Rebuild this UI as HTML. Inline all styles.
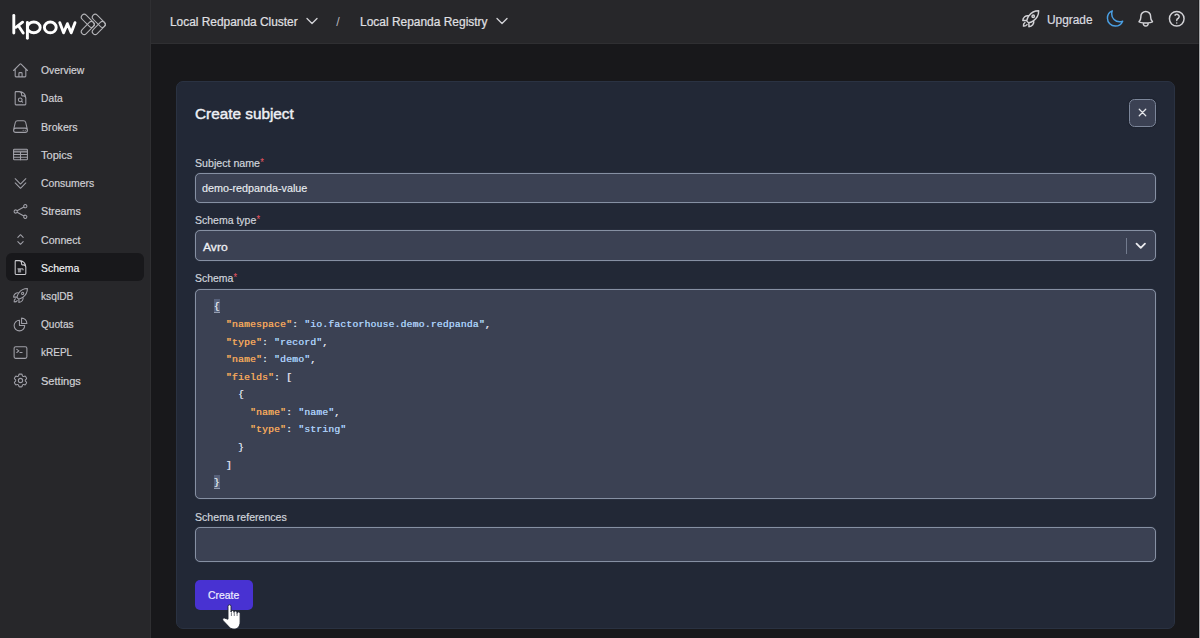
<!DOCTYPE html>
<html lang="en">
<head>
<meta charset="utf-8">
<title>kpow - Create subject</title>
<style>
*{box-sizing:border-box;margin:0;padding:0}
html,body{width:1200px;height:638px;overflow:hidden;background:#18181b;font-family:"Liberation Sans",sans-serif;color:#e5e7eb}
.t{position:absolute;white-space:nowrap;line-height:1;transform-origin:0 50%;display:block}
#sidebar{position:absolute;left:0;top:0;width:151px;height:638px;background:#27272a;border-right:1px solid #2f2f32}
#header{position:absolute;left:151px;top:0;width:1049px;height:44px;background:#27272a;border-bottom:1px solid #2f2f32}
#navactive{position:absolute;left:6px;top:253.3px;width:138px;height:27.6px;border-radius:6px;background:#18181b}
.ni{position:absolute;left:11.85px;width:17px;height:17px;fill:none;stroke:#a0a0a8;color:#a0a0a8;stroke-width:1.5;stroke-linecap:round;stroke-linejoin:round}
.ni.on{stroke:#c9c9ce;color:#c9c9ce}
.nt{color:#d0d0d5;-webkit-text-stroke:0.2px #d0d0d5}
.hicon{position:absolute;fill:none;stroke:#d2d2d6;stroke-width:1.8;stroke-linecap:round;stroke-linejoin:round}
#panel{position:absolute;left:176px;top:81px;width:999px;height:548px;background:#222836;border:1px solid #2a3242;border-radius:7px}
.lab{color:#d0d4dc;-webkit-text-stroke:0.2px #d0d4dc}
.lab i{font-style:normal;color:#ee5661;font-size:10px;position:relative;top:-0.9px;left:0.4px;-webkit-text-stroke:0}
.field{position:absolute;left:195px;width:961px;background:#3b4153;border:1px solid #8690a3;border-radius:5px;box-shadow:0 0 1px rgba(134,144,163,.55)}
#code{position:absolute;left:195px;top:288.6px;width:961px;height:210.4px;background:#3b4153;border:1px solid #8690a3;border-radius:5px;box-shadow:0 0 1px rgba(134,144,163,.55)}
#code pre{position:absolute;left:17.8px;top:8.8px;font-family:"Liberation Mono",monospace;font-size:9.7px;letter-spacing:0.21px;line-height:17.58px;color:#d7dce6;text-shadow:0.3px 0 0 currentColor}
#code .k{color:#efa65c}
#code .s{color:#a8ccf3}
#code .m{background:#57617b;padding:2px 0 0;border-bottom:1px solid #949db0;color:#dde1e9}
#close{position:absolute;left:1129px;top:99.3px;width:27.2px;height:27.3px;background:#3b4153;border:1px solid #7c869a;border-radius:5.5px;box-shadow:0 0 2px rgba(0,0,0,.35)}
#close svg{position:absolute;left:6.1px;top:6.1px;width:13px;height:13px;fill:none;stroke:#e4e6ea;stroke-width:2.3;stroke-linecap:round}
#create{position:absolute;left:195px;top:580px;width:58px;height:30px;background:#4832d2;border-radius:5px}
#edge{position:absolute;left:1199px;top:0;width:1px;height:638px;background:#ababad}
#edge2{position:absolute;left:1198px;top:0;width:1px;height:638px;background:rgba(0,0,0,.22)}
</style>
</head>
<body>
<div id="sidebar">
<svg style="position:absolute;left:0;top:0" width="150" height="50" viewBox="0 0 150 50" fill="none">
<g stroke="#ffffff" stroke-width="2.9" stroke-linecap="round" stroke-linejoin="round">
<path d="M13.8 15.4V33"/><path d="M22.6 22.2 15.8 27.3"/><path d="M18.6 26 23.2 33"/>
<ellipse cx="33.8" cy="27.4" rx="6.4" ry="5.4"/><path d="M27.4 22.5V38.2"/>
<ellipse cx="50.3" cy="27.4" rx="5.9" ry="5.4"/>
<path d="M59.8 22.7 63.6 32.8 67.4 23.7 71.2 32.8 75 22.7"/>
</g>
<g stroke="#b4b4b8" stroke-width="1.05">
<rect x="-2.9" y="-2.9" width="15.95" height="5.8" rx="2.9" transform="translate(84.2 17.2) rotate(45)"/><rect x="-2.9" y="-2.9" width="15.95" height="5.8" rx="2.9" transform="translate(84.2 31.6) rotate(-45)"/><rect x="-2.9" y="-2.9" width="15.95" height="5.8" rx="2.9" transform="translate(95.2 17.2) rotate(45)"/><rect x="-2.9" y="-2.9" width="15.95" height="5.8" rx="2.9" transform="translate(95.2 31.6) rotate(-45)"/>
</g>
</svg>
<div id="navactive"></div>
<svg class="ni" style="top:61.70px" viewBox="0 0 24 24"><path d="m2.25 12 8.954-8.955c.44-.439 1.152-.439 1.591 0L21.75 12M4.5 9.75v10.125c0 .621.504 1.125 1.125 1.125H9.75v-4.875c0-.621.504-1.125 1.125-1.125h2.25c.621 0 1.125.504 1.125 1.125V21h4.125c.621 0 1.125-.504 1.125-1.125V9.75M8.25 21h8.25"/></svg><span class="t nt" style="left:41.00px;top:65.27px;font-size:11.5px;transform:scaleX(0.9030);">Overview</span>
<svg class="ni" style="top:89.92px" viewBox="0 0 24 24"><path d="M19.5 14.25v-2.625a3.375 3.375 0 0 0-3.375-3.375h-1.5A1.125 1.125 0 0 1 13.5 7.125v-1.5a3.375 3.375 0 0 0-3.375-3.375H8.25m5.231 13.481L15 17.25m-4.5-15H5.625c-.621 0-1.125.504-1.125 1.125v16.5c0 .621.504 1.125 1.125 1.125h12.75c.621 0 1.125-.504 1.125-1.125V11.25a9 9 0 0 0-9-9Zm3.75 11.625a2.625 2.625 0 1 1-5.25 0 2.625 2.625 0 0 1 5.25 0Z"/></svg><span class="t nt" style="left:41.00px;top:93.49px;font-size:11.5px;transform:scaleX(0.8930);">Data</span>
<svg class="ni" style="top:118.14px" viewBox="0 0 24 24"><path d="M21.75 17.25v-.228a4.5 4.5 0 0 0-.12-1.03l-2.268-9.64a3.375 3.375 0 0 0-3.285-2.602H7.923a3.375 3.375 0 0 0-3.285 2.602l-2.268 9.64a4.5 4.5 0 0 0-.12 1.03v.228m19.5 0a3 3 0 0 1-3 3H5.25a3 3 0 0 1-3-3m19.5 0a3 3 0 0 0-3-3H5.25a3 3 0 0 0-3 3m16.5 0h.008v.008h-.008v-.008Zm-3 0h.008v.008h-.008v-.008Z"/></svg><span class="t nt" style="left:41.00px;top:121.71px;font-size:11.5px;transform:scaleX(0.9260);">Brokers</span>
<svg class="ni" style="top:146.36px" viewBox="0 0 24 24"><rect x="2.25" y="4.5" width="19.5" height="3.75" fill="currentColor" stroke="none" opacity=".3"/><rect x="2.25" y="4.5" width="19.5" height="15" rx="1.2"/><path d="M2.25 8.25h19.5M2.25 12h19.5M2.25 15.75h19.5M12 8.25V19.5"/></svg><span class="t nt" style="left:41.00px;top:149.93px;font-size:11.5px;transform:scaleX(0.9630);">Topics</span>
<svg class="ni" style="top:174.58px" viewBox="0 0 24 24"><path d="m4.5 5.25 7.5 7.5 7.5-7.5m-15 6 7.5 7.5 7.5-7.5"/></svg><span class="t nt" style="left:41.00px;top:178.15px;font-size:11.5px;transform:scaleX(0.9060);">Consumers</span>
<svg class="ni" style="top:202.80px" viewBox="0 0 24 24"><path d="M7.217 10.907a2.25 2.25 0 1 0 0 2.186m0-2.186c.18.324.283.696.283 1.093s-.103.77-.283 1.093m0-2.186 9.566-5.314m-9.566 7.5 9.566 5.314m0 0a2.25 2.25 0 1 0 3.935 2.186 2.25 2.25 0 0 0-3.935-2.186Zm0-12.814a2.25 2.25 0 1 0 3.933-2.185 2.25 2.25 0 0 0-3.933 2.185Z"/></svg><span class="t nt" style="left:41.00px;top:206.37px;font-size:11.5px;transform:scaleX(0.9300);">Streams</span>
<svg class="ni" style="top:231.02px" viewBox="0 0 24 24"><path d="M8.25 15 12 18.75 15.75 15m-7.5-6L12 5.25 15.75 9"/></svg><span class="t nt" style="left:41.00px;top:234.59px;font-size:11.5px;transform:scaleX(0.9220);">Connect</span>
<svg class="ni on" style="top:259.24px" viewBox="0 0 24 24"><path d="M19.5 14.25v-2.625a3.375 3.375 0 0 0-3.375-3.375h-1.5A1.125 1.125 0 0 1 13.5 7.125v-1.5a3.375 3.375 0 0 0-3.375-3.375H8.25m2.250 0H5.625c-.621 0-1.125.504-1.125 1.125v17.25c0 .621.504 1.125 1.125 1.125h12.75c.621 0 1.125-.504 1.125-1.125V11.25a9 9 0 0 0-9-9Z"/><rect x="8.3" y="14" width="4.6" height="5" fill="#8d8d93" stroke="none"/><path d="M8.3 13.9h7.300v1.600" stroke-width="1.300"/></svg><span class="t nt" style="left:41.00px;top:262.81px;font-size:11.5px;transform:scaleX(0.9080);color:#ffffff;">Schema</span>
<svg class="ni" style="top:287.46px" viewBox="0 0 24 24"><path d="M15.59 14.37a6 6 0 0 1-5.84 7.38v-4.8m5.84-2.58a14.98 14.98 0 0 0 6.16-12.12A14.98 14.98 0 0 0 9.631 8.41m5.96 5.96a14.926 14.926 0 0 1-5.841 2.58m-.119-8.54a6 6 0 0 0-7.381 5.84h4.8m2.581-5.84a14.927 14.927 0 0 0-2.58 5.84m2.699 2.7c-.103.021-.207.041-.311.06a15.09 15.09 0 0 1-2.448-2.448 14.9 14.9 0 0 1 .06-.312m-2.24 2.39a4.493 4.493 0 0 0-1.757 4.306 4.493 4.493 0 0 0 4.306-1.758M16.5 9a1.5 1.5 0 1 1-3 0 1.5 1.5 0 0 1 3 0Z"/></svg><span class="t nt" style="left:41.00px;top:291.03px;font-size:11.5px;transform:scaleX(0.8890);">ksqlDB</span>
<svg class="ni" style="top:315.68px" viewBox="0 0 24 24"><path d="M10.5 6a7.5 7.5 0 1 0 7.5 7.5h-7.5V6Z"/><path d="M13.5 10.5H21A7.5 7.5 0 0 0 13.5 3v7.5Z"/></svg><span class="t nt" style="left:41.00px;top:319.25px;font-size:11.5px;transform:scaleX(0.8790);">Quotas</span>
<svg class="ni" style="top:343.90px" viewBox="0 0 24 24"><path d="m6.75 7.5 3 2.25-3 2.25m4.5 0h3m-9 8.25h13.5A2.25 2.25 0 0 0 21 18V6a2.25 2.25 0 0 0-2.25-2.25H5.25A2.25 2.25 0 0 0 3 6v12a2.25 2.25 0 0 0 2.25 2.25Z"/></svg><span class="t nt" style="left:41.00px;top:347.47px;font-size:11.5px;transform:scaleX(0.8690);">kREPL</span>
<svg class="ni" style="top:372.12px" viewBox="0 0 24 24"><path d="M9.594 3.94c.09-.542.56-.94 1.11-.94h2.593c.55 0 1.02.398 1.11.94l.213 1.281c.063.374.313.686.645.87.074.04.147.083.22.127.325.196.72.257 1.075.124l1.217-.456a1.125 1.125 0 0 1 1.37.49l1.296 2.247a1.125 1.125 0 0 1-.26 1.431l-1.003.827c-.293.241-.438.613-.43.992a7.723 7.723 0 0 1 0 .255c-.008.378.137.75.43.991l1.004.827c.424.35.534.955.26 1.43l-1.298 2.247a1.125 1.125 0 0 1-1.369.491l-1.217-.456c-.355-.133-.75-.072-1.076.124a6.47 6.47 0 0 1-.22.128c-.331.183-.581.495-.644.869l-.213 1.281c-.09.543-.56.94-1.11.94h-2.594c-.55 0-1.019-.398-1.11-.94l-.213-1.281c-.062-.374-.312-.686-.644-.87a6.52 6.52 0 0 1-.22-.127c-.325-.196-.72-.257-1.076-.124l-1.217.456a1.125 1.125 0 0 1-1.369-.49l-1.297-2.247a1.125 1.125 0 0 1 .26-1.431l1.004-.827c.292-.24.437-.613.43-.991a6.932 6.932 0 0 1 0-.255c.007-.38-.138-.751-.43-.992l-1.004-.827a1.125 1.125 0 0 1-.26-1.43l1.297-2.247a1.125 1.125 0 0 1 1.37-.491l1.216.456c.356.133.751.072 1.076-.124.072-.044.146-.086.22-.128.332-.183.582-.495.644-.869l.214-1.28Z"/><path d="M15 12a3 3 0 1 1-6 0 3 3 0 0 1 6 0Z"/></svg><span class="t nt" style="left:41.00px;top:375.69px;font-size:11.5px;transform:scaleX(0.9600);">Settings</span>
</div>
<div id="header"><span class="t" style="left:19.00px;top:15.92px;font-size:12.5px;transform:scaleX(0.9520);color:#e0e0e4;-webkit-text-stroke:0.2px #e0e0e4;">Local Redpanda Cluster</span><svg class="hicon" style="left:153.15px;top:13.00px;width:16px;height:16px;stroke-width:2" viewBox="0 0 24 24"><path d="m19.5 8.25-7.5 7.5-7.5-7.5"/></svg><span class="t" style="left:185.30px;top:15.92px;font-size:12.5px;color:#b4b4bc;">/</span><span class="t" style="left:209.00px;top:15.92px;font-size:12.5px;transform:scaleX(0.9560);color:#e0e0e4;-webkit-text-stroke:0.2px #e0e0e4;">Local Repanda Registry</span><svg class="hicon" style="left:343.20px;top:13.00px;width:16px;height:16px;stroke-width:2" viewBox="0 0 24 24"><path d="m19.5 8.25-7.5 7.5-7.5-7.5"/></svg><svg class="hicon" style="left:870.45px;top:8.85px;width:19.5px;height:19.5px;" viewBox="0 0 24 24"><path d="M15.59 14.37a6 6 0 0 1-5.84 7.38v-4.8m5.84-2.58a14.98 14.98 0 0 0 6.16-12.12A14.98 14.98 0 0 0 9.631 8.41m5.96 5.96a14.926 14.926 0 0 1-5.841 2.58m-.119-8.54a6 6 0 0 0-7.381 5.84h4.8m2.581-5.84a14.927 14.927 0 0 0-2.58 5.84m2.699 2.7c-.103.021-.207.041-.311.06a15.09 15.09 0 0 1-2.448-2.448 14.9 14.9 0 0 1 .06-.312m-2.24 2.39a4.493 4.493 0 0 0-1.757 4.306 4.493 4.493 0 0 0 4.306-1.758M16.5 9a1.5 1.5 0 1 1-3 0 1.5 1.5 0 0 1 3 0Z"/></svg><span class="t" style="left:895.75px;top:13.72px;font-size:12.5px;transform:scaleX(0.9490);color:#dcdce0;-webkit-text-stroke:0.2px #dcdce0;">Upgrade</span><svg class="hicon" style="left:953.95px;top:8.55px;width:19.5px;height:19.5px;stroke:#4a9fe3" viewBox="0 0 24 24"><path d="M21.752 15.002A9.72 9.72 0 0 1 18 15.75c-5.385 0-9.75-4.365-9.75-9.75 0-1.33.266-2.597.748-3.752A9.753 9.753 0 0 0 3 11.25C3 16.635 7.365 21 12.75 21a9.753 9.753 0 0 0 9.002-5.998Z"/></svg><svg class="hicon" style="left:985.35px;top:8.85px;width:19.5px;height:19.5px;" viewBox="0 0 24 24"><path d="M14.857 17.082a23.848 23.848 0 0 0 5.454-1.31A8.967 8.967 0 0 1 18 9.75V9A6 6 0 0 0 6 9v.75a8.967 8.967 0 0 1-2.312 6.022c1.733.64 3.56 1.085 5.455 1.31m5.714 0a24.255 24.255 0 0 1-5.714 0m5.714 0a3 3 0 1 1-5.714 0"/></svg><svg class="hicon" style="left:1016.15px;top:8.95px;width:19.5px;height:19.5px;" viewBox="0 0 24 24"><path d="M9.879 7.519c1.171-1.025 3.071-1.025 4.242 0 1.172 1.025 1.172 2.687 0 3.712-.203.179-.43.326-.67.442-.745.361-1.45.999-1.45 1.827v.75M21 12a9 9 0 1 1-18 0 9 9 0 0 1 18 0Zm-9 5.25h.008v.008H12v-.008Z"/></svg></div>
<div id="panel"></div>
<span class="t" style="left:195.00px;top:106.55px;font-size:14px;transform:scaleX(1.0940);color:#eef0f5;-webkit-text-stroke:0.4px #eef0f5;">Create subject</span>
<div id="close"><svg viewBox="0 0 24 24"><path d="M6 18 18 6M6 6l12 12"/></svg></div>
<span class="t lab" style="left:195.00px;top:157.57px;font-size:11.5px;transform:scaleX(0.9240);">Subject name<i>*</i></span>
<div class="field" style="top:173px;height:29.5px"></div>
<span class="t" style="left:201.90px;top:183.47px;font-size:11.5px;transform:scaleX(0.9360);color:#e9ecf1;-webkit-text-stroke:0.15px #e9ecf1;">demo-redpanda-value</span>
<span class="t lab" style="left:195.00px;top:215.37px;font-size:11.5px;transform:scaleX(0.9120);">Schema type<i>*</i></span>
<div class="field" style="top:230.2px;height:30.6px"></div>
<span class="t" style="left:203.20px;top:240.68px;font-size:11.6px;transform:scaleX(1.0460);color:#eef0f4;-webkit-text-stroke:0.3px #eef0f4;">Avro</span>
<div style="position:absolute;left:1126px;top:237.5px;width:1px;height:16px;background:#727b8e"></div>
<svg style="position:absolute;left:1134.25px;top:238.95px;width:13.5px;height:13.5px;fill:none;stroke:#ecedf0;stroke-width:3.2;stroke-linecap:round;stroke-linejoin:round" viewBox="0 0 24 24"><path d="m19.5 8.25-7.5 7.5-7.5-7.5"/></svg>
<span class="t lab" style="left:195.00px;top:273.27px;font-size:11.5px;transform:scaleX(0.9050);">Schema<i>*</i></span>
<div id="code"><pre><span class="m">{</span>
  <span class="k">"namespace"</span>: <span class="s">"io.factorhouse.demo.redpanda"</span>,
  <span class="k">"type"</span>: <span class="s">"record"</span>,
  <span class="k">"name"</span>: <span class="s">"demo"</span>,
  <span class="k">"fields"</span>: [
    {
      <span class="k">"name"</span>: <span class="s">"name"</span>,
      <span class="k">"type"</span>: <span class="s">"string"</span>
    }
  ]
<span class="m">}</span></pre></div>
<span class="t lab" style="left:195.00px;top:511.57px;font-size:11.5px;transform:scaleX(0.9206);">Schema references</span>
<div class="field" style="top:527.3px;height:34.8px"></div>
<div id="create"></div>
<span class="t" style="left:208.00px;top:590.33px;font-size:11.3px;transform:scaleX(0.9230);color:#efedff;-webkit-text-stroke:0.2px #efedff;">Create</span>
<svg style="position:absolute;left:220px;top:602px" width="24" height="30" viewBox="0 0 24 30">
<path d="M8 4.300A1.500 1.500 0 0 1 11 4.300L11 10A1.450 1.450 0 0 1 14 10L14 10.500A1.450 1.450 0 0 1 17 10.500L17 11.500A1.550 1.550 0 0 1 20.100 11.500L20.100 20C20.100 24.500 17.500 27.100 14 27.100C11.200 27.100 9.600 25.800 8.500 24.300L3.200 18.700C2.200 17.500 2.800 15.700 4.500 16.100L8 17.200Z" fill="#ffffff" stroke="#1d2230" stroke-width="0.9" stroke-linejoin="round"/>
<path d="M11.400 10.300V14M14.250 10.700V14M17.100 11.600V14" stroke="#3a3f4c" stroke-width="0.7" fill="none"/>
</svg>
<div id="edge2"></div><div id="edge"></div>
</body>
</html>
